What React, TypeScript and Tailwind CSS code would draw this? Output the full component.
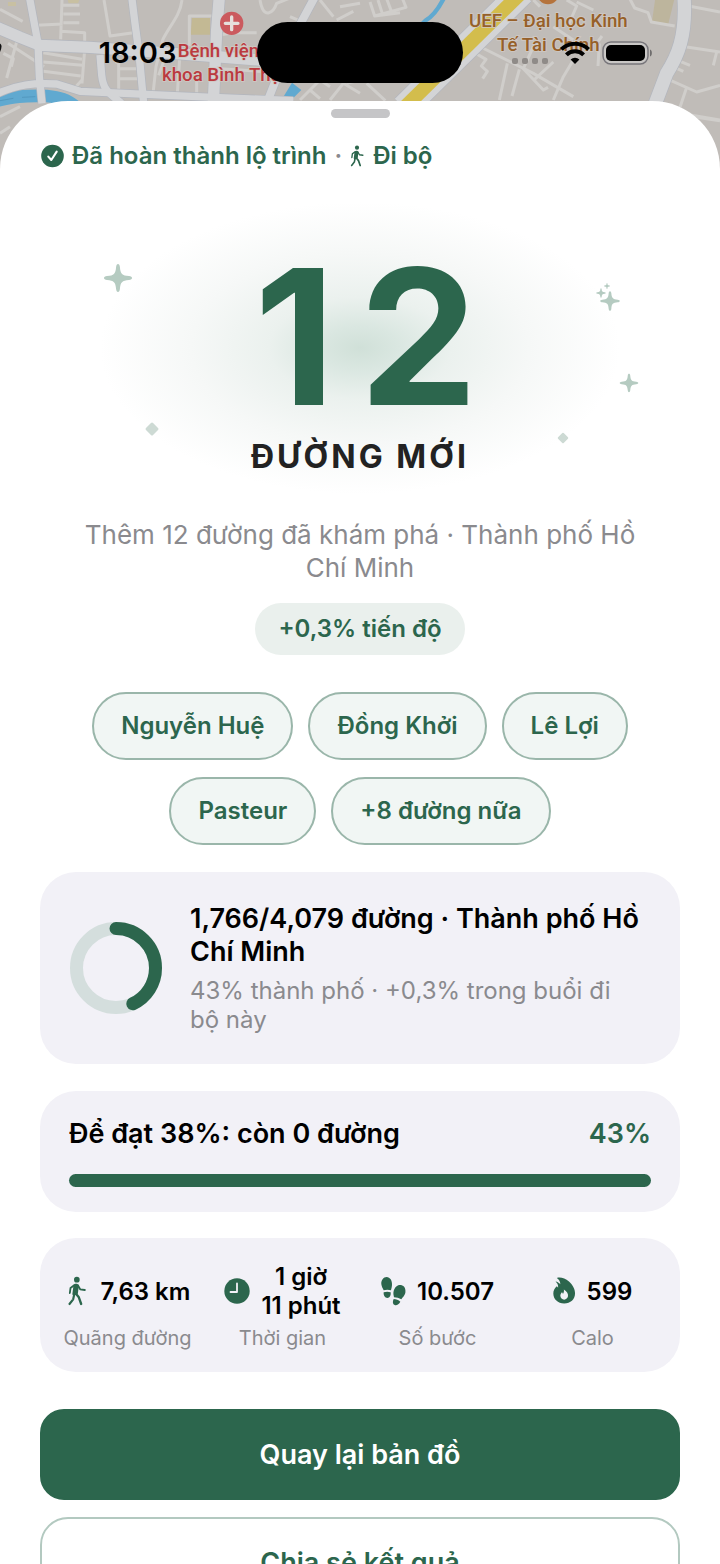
import React from 'react';

const STREETS = ['Nguyễn Huệ', 'Đồng Khởi', 'Lê Lợi', 'Pasteur', '+8 đường nữa'];

// Each road is drawn twice: a bluish casing, then the lighter surface
const ROADS = [
    { d: 'M-10 82L60 112 120 136 270 142 520 160 780 180', width: 34 },
    { d: 'M395-10l10 80 12 90 14 150', width: 22 },
    { d: 'M658-10L650 90l-10 220', width: 34 },
    { d: 'M88-10l26 140 4 100 8 80', width: 22 },
    { d: 'M300 165l5 60c4 40 14 50 60 85', width: 22 },
    { d: 'M-10 282c60-28 110-34 180-30l70 22 400 18 240 10', width: 22 },
    { d: 'M945-10L875 120 800 310', width: 24 },
    { d: 'M2052-10c8 120-20 180-52 230l-34 90', width: 40 },
    { d: 'M1566-24L1212 324', width: 78 },
];

const MapBackdrop = () => (
    <svg
        className="absolute inset-x-0 top-0 h-[180px] w-full"
        viewBox="0 0 2160 540"
        preserveAspectRatio="xMidYMin slice"
        aria-hidden="true"
    >
        <rect width="2160" height="540" fill="#c0bcb8" />

        {/* Parks and buildings */}
        <path d="M576 54h54v50h-58z" fill="#c3b994" />
        <path d="M1966-6h58l-20 82-48-12z" fill="#bdb59d" />
        <path d="M24 6h24v12H24zM202-4h38l-6 14h-28z" fill="#c8c0a2" />

        {/* Water */}
        <path d="M-10 302c50-12 80-16 150-14 40 4 60 10 90 34" fill="none" stroke="#60a9d0" strokeWidth="38" />
        <path d="M0 302l40-7M66 292l40-2" fill="none" stroke="#4b8fb5" strokeWidth="2" />
        <path d="M876 248l28 22-34 34h-28z" fill="#60a9d0" />
        <path d="M1334-10c-20 40-36 60-58 72l-30 30" fill="none" stroke="#60a9d0" strokeWidth="13" />

        {/* Small streets */}
        <g fill="none" stroke="#d0cecb" strokeWidth="9" strokeLinejoin="round">
            <path d="M0 28l68 36M108 76l80-4M186 0l-4 118M186 16h52M190 42h50M190 68h48M182 94l72 4v52" />
            <path d="M312 0l18 108 70-10M546 0c-6 50-40 80-58 120l-20 80-10 90" />
            <path d="M640 48h-72v90M640 108l60-10 70 0" />
            <path d="M52 118L20 234M24 130l108 70M10 160l30 16-6 24M130 158l116 20M130 186l118 10M130 214l112 14" />
            <path d="M254 150l-8 100M246 240l-20 22M356 176v110M356 206h66M356 236h66M352 190l-14-26" />
            <path d="M500 160l-24 66M540 160l-8 120M590 240v50M660 206l150 10" />
            <path d="M780 0c10 60 40 40 50 10l50-20M870 50l70 30M960 0l40 50M1020 20l60-10M1010 60l50-26" />
            <path d="M900 300l60-60 30 20M930 270l30 26M990 300l40-50 50 30M1040 250l40-10" />
            <path d="M1110 6l14 42 94-26-12-30M1124 48l76-10M1134 0l14 44M1160-4l14 38M1100 250l56 52" />
            <path d="M1420 156l38 22-14 20 18 16-14 22M1400 120l200 100 120 70M1522 190l-24 110" />
            <path d="M1558 208l-22 80M1600 140l-30 66 60 64 14-8M1660 186l-60 56M1720 180l-30 50-30 70" />
            <path d="M1700 0l30 18-26 60M1780 30l-50-24M1660 80l60 40M1620 20l-20-20M1790 130l16-22M1798 130l-4 68" />
            <path d="M1886-10l18 34 40 14 10 28 70 12M2066 18l94 18M2040 138l120 18M2020 176l50 20M2010 196l40 18" />
            <path d="M2000 236l90 40 70-20M2060 262l-20 60M2150 156l-10 40M1950 300l90 40 120 20M2090 352l70 10" />
            <path d="M0 350l60-30M0 400l30-20" />
        </g>

        {/* Main roads */}
        <g fill="none" stroke="#b2b6be" strokeLinejoin="round">
            {ROADS.map(road => <path key={road.d} d={road.d} strokeWidth={road.width + 4} />)}
        </g>
        <g fill="none" stroke="#d3d4d6" strokeLinejoin="round">
            {ROADS.map(road => <path key={road.d} d={road.d} strokeWidth={road.width} />)}
        </g>
        <path d="M1566-24L1212 324" fill="none" stroke="#d3bd4c" strokeWidth="42" />

        {/* Place pins */}
        <circle cx="695" cy="70" r="35" fill="#cb5a5e" />
        <path d="M695 51v38M676 70h38" stroke="#e6dfdc" strokeWidth="10" strokeLinecap="round" />
        <circle cx="1644" cy="-20" r="33" fill="#b5733c" />
        <path d="M-8 134c10-2 10 6 4 20" fill="none" stroke="#111" strokeWidth="9" />

        <g
            fontFamily="Roboto, 'Noto Sans', sans-serif"
            fontSize="56"
            fontWeight="500"
            paintOrder="stroke"
            stroke="#d0c9c3"
            strokeWidth="5"
        >
            <g fill="#bb3a3f">
                <text x="533" y="172">Bệnh viện Đa</text>
                <text x="486" y="243">khoa Bình Thạnh</text>
            </g>
            <g fill="#966029" textAnchor="middle">
                <text x="1645" y="81">UEF – Đại học Kinh</text>
                <text x="1645" y="152">Tế Tài Chính</text>
            </g>
        </g>
    </svg>
);

const StatusBar = () => (
    <div className="absolute inset-x-0 top-0 flex h-[105px] items-center px-[18px]">
        <span className="flex-1 text-center text-[29px] font-semibold text-black">18:03</span>
        <div className="h-[61px] w-[206px] rounded-full bg-black" />
        <div className="flex flex-1 items-center justify-center gap-3">
            <svg className="mt-4 h-2 w-9" viewBox="0 0 36 8" fill="#8f8b88" aria-hidden="true">
                <rect y="1" width="6" height="6" rx="2" />
                <rect x="10" y="1" width="6" height="6" rx="2" />
                <rect x="20" y="1" width="6" height="6" rx="2" />
                <rect x="30" y="1" width="6" height="6" rx="2" />
            </svg>
            <svg className="h-[22px] w-[30px]" viewBox="0 0 30 22" fill="none" stroke="#000" strokeWidth="4" aria-label="Wi-Fi">
                <path d="M1.400 7.400a19.300 19.300 0 0 1 27.200 0" />
                <path d="M6.400 12.800a12.200 12.200 0 0 1 17.200 0" />
                <path d="M15 22l-4.400-4.400a6.200 6.200 0 0 1 8.800 0z" fill="#000" stroke="none" />
            </svg>
            <svg className="h-6 w-[51px]" viewBox="0 0 51 24" aria-label="Pin">
                <rect x="1" y="1" width="45" height="22" rx="8" fill="#c9c7c5" stroke="#77757a" strokeWidth="1.500" />
                <rect x="4" y="4" width="39" height="16" rx="5" fill="#000" />
                <path d="M48 8.500c2.500.8 2.500 6.200 0 7z" fill="#6f6d6d" />
            </svg>
        </div>
    </div>
);

const WalkIcon = ({ className }: { className: string }) => (
    <svg className={className} viewBox="0 0 60 90" fill="none" stroke="currentColor" strokeLinecap="round" strokeLinejoin="round" aria-hidden="true">
        <circle cx="28" cy="11" r="8.500" fill="currentColor" stroke="none" />
        <path d="M18 28c3-6 13-6 16 1l-3 24 -12 6c-4-1-5-4-4-8z" fill="currentColor" stroke="none" />
        <path d="M20 28L9 36 7 51" strokeWidth="5.500" />
        <path d="M31 28l7 12 14 2" strokeWidth="5.500" />
        <path d="M20 56l-3 14L6 84" strokeWidth="6.500" />
        <path d="M23 50l11 14 7 20" strokeWidth="7" />
    </svg>
);

const CheckIcon = () => (
    <svg className="h-6 w-6" viewBox="0 0 24 24" aria-hidden="true">
        <circle cx="12.500" cy="12" r="11.300" fill="#2c664d" />
        <path d="M8.300 12.600l3 3.400 5.400-8.400" fill="none" stroke="#fff" strokeWidth="2.100" strokeLinecap="round" strokeLinejoin="round" />
    </svg>
);

const ClockIcon = () => (
    <svg className="h-[30px] w-[26px] shrink-0" viewBox="0 0 26 30" aria-hidden="true">
        <circle cx="13" cy="15" r="12.700" fill="currentColor" />
        <path d="M13 7.500v8.500H6.500" fill="none" stroke="#f2f1f7" strokeWidth="1.800" strokeLinecap="round" strokeLinejoin="round" />
    </svg>
);

const StepsIcon = () => (
    <svg className="h-[30px] w-[25px] shrink-0" viewBox="0 0 75 90" fill="currentColor" aria-hidden="true">
        <path d="M17 3c10 0 17 11 16 24-.5 7-2 11-3 16-7-2-15-2-22 0C6 38 2 33 1 25 0 13 7 3 17 3z" />
        <path d="M8 49c7-2 14-2 21 0 1 10-3 17-10 17S7 59 8 49z" />
        <path d="M60 27c11 2 15 13 13 24-2 8-8 13-12 19-7-4-14-6-22-6-1-6-3-11-1-19 3-12 12-20 22-18z" />
        <path d="M38 69c7 1 15 3 20 8-4 8-11 12-17 10s-7-10-3-18z" />
    </svg>
);

const FlameIcon = () => (
    <svg className="h-[30px] w-[23px] shrink-0" viewBox="0 0 72 90" aria-hidden="true">
        <path
            d="M12 4c10-3 26 0 38 11 11 10 19 23 19 37 0 19-14 32-34 32S1 71 1 53c0-10 4-17 11-23 2 1 3 3 4 5 1-9-3-16-8-20 6 1 11 4 15 9 0-9-4-15-11-20z"
            fill="currentColor"
        />
        <path d="M34 40c9 6 14 13 13 21-1 7-6 11-12 11s-12-5-12-12c0-4 2-8 5-11 2 1 3 3 3 5 3-4 4-9 3-14z" fill="#f2f1f7" />
    </svg>
);

// Glow, sparkles and confetti behind the street count
const HeroDecoration = () => (
    <svg className="absolute top-0 left-1/2 h-[320px] w-[640px] -translate-x-1/2" viewBox="0 0 640 320" aria-hidden="true">
        <defs>
            <radialGradient id="glow">
                <stop offset="0" stopColor="#d0e0d8" />
                <stop offset="0.15" stopColor="#dae7e1" />
                <stop offset="0.35" stopColor="#ebf1ee" />
                <stop offset="0.65" stopColor="#f6f8f7" />
                <stop offset="1" stopColor="#fff" />
            </radialGradient>
            <path id="spark" d="M0-14C1-14 1.700-13 1.900-11 2.500-4 4-2.500 11-1.900 13-1.700 14-1 14 0S13 1.700 11 1.900C4 2.500 2.500 4 1.900 11 1.700 13 1 14 0 14S-1.700 13-1.900 11C-2.500 4-4 2.500-11 1.900-13 1.700-14 1-14 0S-13-1.700-11-1.900C-4-2.500-2.500-4-1.900-11-1.700-13-1-14 0-14z" />
        </defs>
        <ellipse cx="320" cy="158" rx="260" ry="146" fill="url(#glow)" />
        <g fill="#b5cbc1">
            <use href="#spark" transform="translate(78 88)" />
            <use href="#spark" transform="translate(570 111) scale(.7)" />
            <use href="#spark" transform="translate(561 103) scale(.34)" />
            <use href="#spark" transform="translate(567 96) scale(.22)" />
            <use href="#spark" transform="translate(589 193) scale(.66)" />
        </g>
        <g fill="#cddad4">
            <rect x="-5" y="-5" width="10" height="10" rx="1.500" transform="translate(112 239) rotate(45)" />
            <rect x="-4" y="-4" width="8" height="8" rx="1" transform="translate(523 248) rotate(45)" />
        </g>
    </svg>
);

const ProgressRing = ({ percent }: { percent: number }) => (
    <svg className="h-[92px] w-[92px] shrink-0" viewBox="0 0 92 92" fill="none" strokeWidth="13" aria-hidden="true">
        <circle cx="46" cy="46" r="39.500" stroke="#d4dedd" />
        <circle
            cx="46"
            cy="46"
            r="39.500"
            stroke="#2c664d"
            strokeLinecap="round"
            pathLength="100"
            strokeDasharray={`${percent} 100`}
            transform="rotate(-90 46 46)"
        />
    </svg>
);

const Stat = ({ icon, value, label }: { icon: React.ReactNode; value: React.ReactNode; label: string }) => (
    <div className="flex flex-col items-center gap-[6px]">
        <dd className="order-1 flex h-[58px] items-center gap-[11px] text-center text-[24px] leading-[29px] font-semibold text-black">
            <span className="text-[#2c664d]">{icon}</span>
            <span>{value}</span>
        </dd>
        <dt className="order-2 text-[20px] leading-6 text-[#8a8a8e]">{label}</dt>
    </div>
);

const App: React.FC = () => {
    return (
        <div className="relative flex h-screen flex-col overflow-hidden bg-white font-[Inter,sans-serif]">
            <MapBackdrop />
            <StatusBar />

            <main className="relative mt-[101px] flex-1 overflow-hidden rounded-t-[68px] bg-white px-10 pt-2">
                <div className="mx-auto h-[9px] w-[59px] rounded-full bg-[#c5c5c7]" />

                <div className="mt-[23px] flex items-center text-[24px] leading-[30px] font-semibold text-[#2c664d]">
                    <CheckIcon />
                    <span className="ml-2">Đã hoàn thành lộ trình</span>
                    <span className="mx-2 text-[#8a8a8e]">·</span>
                    <WalkIcon className="h-[22px] w-[15px]" />
                    <span className="ml-2">Đi bộ</span>
                </div>

                <section className="relative mt-[19px] h-[320px] text-center">
                    <HeroDecoration />
                    <h1 className="relative flex flex-col items-center pt-[72px]">
                        <span className="pl-9 text-[188px] leading-[150px] font-bold tracking-[24px] text-[#2c664d]">12</span>
                        <span className="mt-5 text-[32px] leading-[50px] font-bold tracking-[3px] text-[#222]">ĐƯỜNG MỚI</span>
                    </h1>
                </section>

                <p className="mx-auto mt-2 max-w-[580px] text-center text-[26px] leading-[33px] text-[#8a8a8e]">
                    Thêm 12 đường đã khám phá · Thành phố Hồ<br />Chí Minh
                </p>

                <div className="mt-[19px] flex justify-center">
                    <span className="rounded-full bg-[#eaf0ed] px-[23px] text-[24px] leading-[52px] font-semibold text-[#2c664d]">
                        +0,3% tiến độ
                    </span>
                </div>

                <ul className="mt-[37px] flex flex-wrap justify-center gap-x-[15px] gap-y-[17px]">
                    {STREETS.map(street => (
                        <li
                            key={street}
                            className="rounded-full border-2 border-[#9ab6aa] bg-[#f1f6f4] px-[27px] text-[24px] leading-[64px] font-semibold text-[#2c664d]"
                        >
                            {street}
                        </li>
                    ))}
                </ul>

                <section className="mt-[27px] flex items-center gap-7 rounded-[36px] bg-[#f2f1f7] p-[30px]">
                    <ProgressRing percent={43} />
                    <div className="flex flex-col gap-2">
                        <h2 className="text-[27px] leading-[33px] font-semibold text-black">
                            1,766/4,079 đường · Thành phố Hồ<br />Chí Minh
                        </h2>
                        <p className="text-[24px] leading-[29px] text-[#8a8a8e]">
                            43% thành phố · +0,3% trong buổi đi<br />bộ này
                        </p>
                    </div>
                </section>

                <section className="mt-[27px] rounded-[36px] bg-[#f2f1f7] px-[29px] pt-[26px] pb-[25px]">
                    <div className="flex items-center justify-between text-[27px] leading-[33px] font-semibold">
                        <h2 className="text-black">Để đạt 38%: còn 0 đường</h2>
                        <span className="text-[#2c664d]">43%</span>
                    </div>
                    <div className="mt-6 h-[13px] rounded-full bg-[#2c664d]" />
                </section>

                <dl className="mt-[26px] grid grid-cols-4 rounded-[36px] bg-[#f2f1f7] px-[10px] pt-6 pb-[22px]">
                    <Stat icon={<WalkIcon className="h-[30px] w-[25px]" />} value="7,63 km" label="Quãng đường" />
                    <Stat icon={<ClockIcon />} value={<>1 giờ<br />11 phút</>} label="Thời gian" />
                    <Stat icon={<StepsIcon />} value="10.507" label="Số bước" />
                    <Stat icon={<FlameIcon />} value="599" label="Calo" />
                </dl>

                <div className="mt-[37px] flex flex-col gap-[17px] pb-10 text-[27px] leading-[87px] font-semibold">
                    <button type="button" className="rounded-[24px] border-2 border-[#2c664d] bg-[#2c664d] text-white">
                        Quay lại bản đồ
                    </button>
                    <button type="button" className="rounded-[28px] border-2 border-[#b3c9c0] bg-white text-[#2c664d]">
                        Chia sẻ kết quả
                    </button>
                </div>
            </main>
        </div>
    );
};

export default App;
